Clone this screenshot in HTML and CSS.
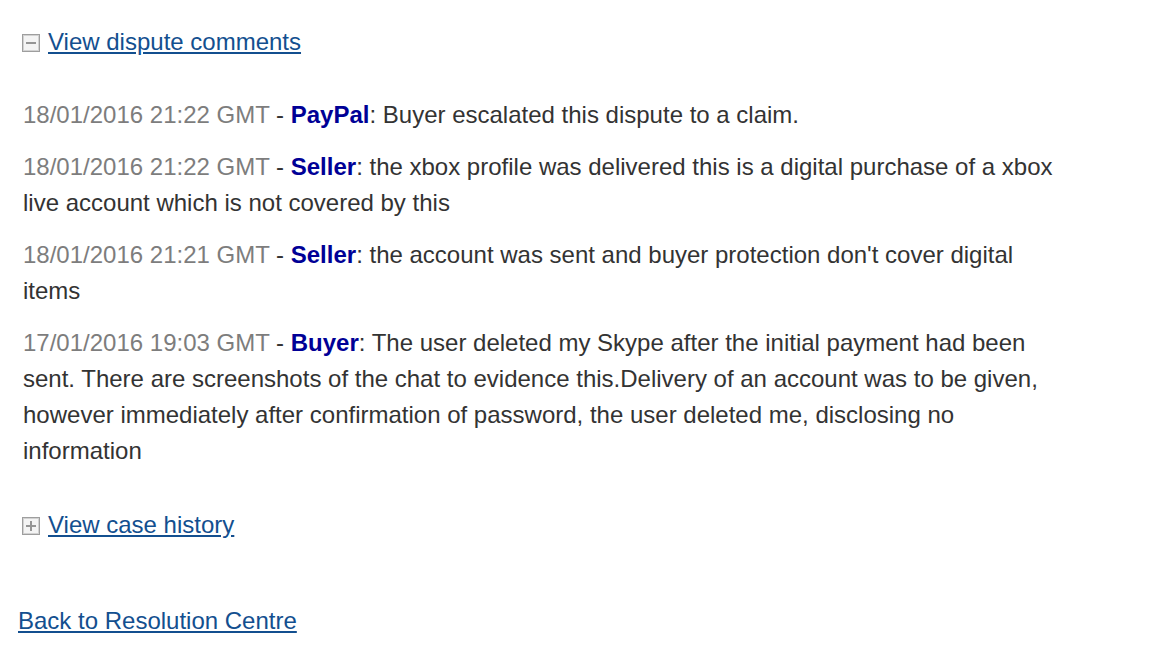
FILE: index.html
```html
<!DOCTYPE html>
<html lang="en">
<head>
<meta charset="utf-8">
<title>Dispute details</title>
<link rel="stylesheet" href="styles.css">
</head>
<body>
<div class="page">
  <div class="section">
    <div class="toggle">
      <svg class="toggle-icon" width="18" height="18" viewBox="0 0 18 18" aria-hidden="true">
        <rect x="0.5" y="0.5" width="17" height="17" fill="#f4f4f4" stroke="#9e9e9e"/>
        <rect x="1.5" y="1.5" width="15" height="15" fill="none" stroke="#d2d2d2"/>
        <rect x="4" y="8" width="10" height="2" fill="#959595"/>
      </svg>
      <a href="#" class="link">View dispute comments</a>
    </div>
    <div class="comments">
      <p class="comment"><span class="date">18/01/2016 21:22 GMT</span> - <b class="who">PayPal</b>: Buyer escalated this dispute to a claim.</p>
      <p class="comment"><span class="date">18/01/2016 21:22 GMT</span> - <b class="who">Seller</b>: the xbox profile was delivered this is a digital purchase of a xbox live account which is not covered by this</p>
      <p class="comment"><span class="date">18/01/2016 21:21 GMT</span> - <b class="who">Seller</b>: the account was sent and buyer protection don't cover digital items</p>
      <p class="comment"><span class="date">17/01/2016 19:03 GMT</span> - <b class="who">Buyer</b>: The user deleted my Skype after the initial payment had been sent. There are screenshots of the chat to evidence this.Delivery of an account was to be given, however immediately after confirmation of password, the user deleted me, disclosing no information</p>
    </div>
  </div>
  <div class="section history">
    <div class="toggle">
      <svg class="toggle-icon" width="18" height="18" viewBox="0 0 18 18" aria-hidden="true">
        <rect x="0.5" y="0.5" width="17" height="17" fill="#f4f4f4" stroke="#9e9e9e"/>
        <rect x="1.5" y="1.5" width="15" height="15" fill="none" stroke="#d2d2d2"/>
        <rect x="4" y="8" width="10" height="2" fill="#959595"/>
        <rect x="8" y="4" width="2" height="10" fill="#959595"/>
      </svg>
      <a href="#" class="link">View case history</a>
    </div>
  </div>
  <div class="back">
    <a href="#" class="link">Back to Resolution Centre</a>
  </div>
</div>
</body>
</html>
```

FILE: styles.css
```css
html, body {
  margin: 0;
  padding: 0;
  background: #ffffff;
}

body {
  font-family: "Liberation Sans", Arial, Helvetica, sans-serif;
  font-size: 24px;
  line-height: 36px;
  color: #333333;
}

.page {
  padding: 24px 0 0 18px;
}

.section {
  padding-left: 5px;
}

.toggle {
  display: flex;
  align-items: center;
  gap: 8px;
  height: 36px;
}

.toggle-icon {
  display: block;
  flex: none;
  margin-left: -1px;
  margin-top: 1px;
}

.link {
  color: #134f8f;
  text-decoration: underline;
}

.comments {
  width: 1040px;
  padding-top: 37px;
}

.comment {
  margin: 0 0 16px 0;
}

.comment:last-child {
  margin-bottom: 0;
}

.date {
  color: #7d7d7d;
}

.who {
  color: #000096;
  font-weight: bold;
}

.history {
  margin-top: 38px;
}

.back {
  margin-top: 60px;
}
```
